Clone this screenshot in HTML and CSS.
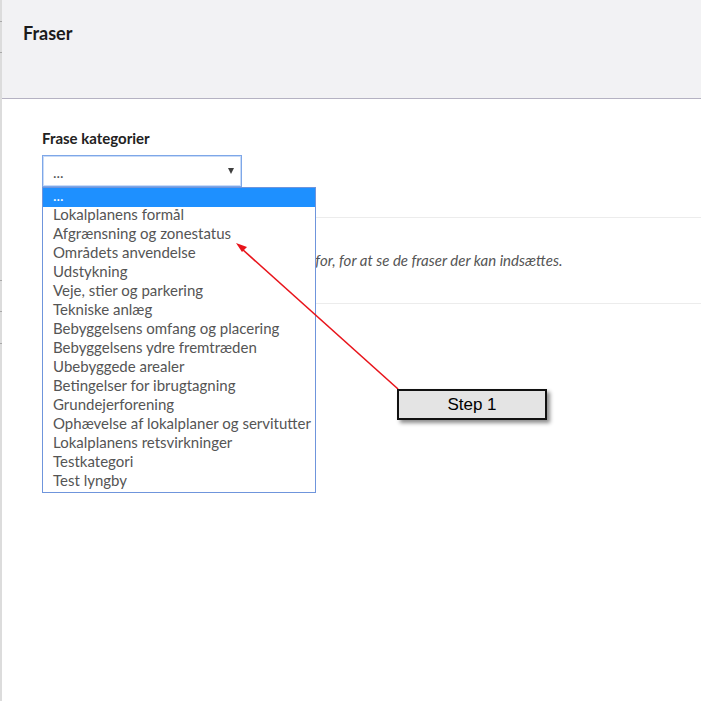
FILE: index.html
```html
<!DOCTYPE html>
<html lang="da">
<head>
<meta charset="utf-8">
<title>Fraser</title>
<link rel="stylesheet" href="styles.css">
</head>
<body>
<div class="app">
  <div class="rail">
    <span class="tick t1"></span>
    <span class="tick t2"></span>
    <span class="tick t3"></span>
    <span class="tick t4"></span>
    <span class="tick t5"></span>
  </div>
  <main class="main">
    <header class="header">
      <h1 class="title">Fraser</h1>
    </header>
    <section class="content">
      <div class="field-label">Frase kategorier</div>
      <div class="select-wrap">
        <div class="select">
          <span class="select-value">...</span>
          <span class="caret"></span>
        </div>
        <ul class="dropdown">
          <li class="option selected">...</li>
          <li class="option">Lokalplanens formål</li>
          <li class="option">Afgrænsning og zonestatus</li>
          <li class="option">Områdets anvendelse</li>
          <li class="option">Udstykning</li>
          <li class="option">Veje, stier og parkering</li>
          <li class="option">Tekniske anlæg</li>
          <li class="option">Bebyggelsens omfang og placering</li>
          <li class="option">Bebyggelsens ydre fremtræden</li>
          <li class="option">Ubebyggede arealer</li>
          <li class="option">Betingelser for ibrugtagning</li>
          <li class="option">Grundejerforening</li>
          <li class="option">Ophævelse af lokalplaner og servitutter</li>
          <li class="option">Lokalplanens retsvirkninger</li>
          <li class="option">Testkategori</li>
          <li class="option">Test lyngby</li>
        </ul>
      </div>
      <div class="hint-row">
        <p class="hint">Vælg venligst en kategori ovenfor, for at se de fraser der kan indsættes.</p>
      </div>
    </section>
  </main>
  <svg class="annotation" width="701" height="701" viewBox="0 0 701 701">
    <line x1="398" y1="389" x2="242" y2="249" stroke="#e8141b" stroke-width="1.6"/>
    <polygon points="236,243 247,247 242,252" fill="#e8141b"/>
  </svg>
  <div class="step">Step 1</div>
</div>
</body>
</html>
```

FILE: styles.css
```css
* { box-sizing: border-box; }
html, body { margin: 0; padding: 0; background: #ffffff; }
body {
  width: 701px;
  height: 701px;
  overflow: hidden;
  font-family: Lato, "Open Sans", sans-serif;
  color: #333;
}
.app {
  position: relative;
  display: flex;
  width: 701px;
  height: 701px;
}
.rail {
  position: relative;
  width: 2px;
  flex: none;
  background: #dcdcdc;
}
.tick {
  position: absolute;
  left: 0;
  width: 2px;
  height: 1px;
  background: #a9a9a9;
}
.t1 { top: 21px; }
.t2 { top: 52px; }
.t3 { top: 280px; }
.t4 { top: 311px; }
.t5 { top: 343px; }
.main {
  flex: 1;
  display: flex;
  flex-direction: column;
  min-width: 0;
}
.header {
  height: 99px;
  background: #f2f2f4;
  border-bottom: 1px solid #b5b2c2;
  padding: 22px 0 0 21px;
}
.title {
  margin: 0;
  font-size: 18px;
  line-height: 22px;
  font-weight: 700;
  color: #1b1b1b;
}
.content {
  padding: 30px 0 0 40px;
}
.field-label {
  font-size: 15px;
  line-height: 18px;
  font-weight: 700;
  color: #222;
}
.select-wrap {
  position: relative;
  margin-top: 8px;
  width: 200px;
}
.select {
  display: flex;
  align-items: center;
  justify-content: space-between;
  height: 32px;
  border: 1px solid #7ea7e8;
  box-shadow: inset 0 0 0 1px #c9dbf7;
  padding: 0 6px 0 10px;
  font-size: 15px;
  color: #555;
}
.select-value { line-height: 18px; padding-top: 2px; }
.caret {
  width: 0;
  height: 0;
  border-left: 3.5px solid transparent;
  border-right: 3.5px solid transparent;
  border-top: 6px solid #3f3f3f;
  margin-right: 1px;
}
.dropdown {
  position: absolute;
  top: 32px;
  left: 0;
  width: 274px;
  margin: 0;
  padding: 0;
  list-style: none;
  background: #fff;
  border: 1px solid #6f95dc;
  z-index: 2;
}
.option {
  height: 19px;
  line-height: 15px;
  padding-left: 10px;
  font-size: 15px;
  color: #555;
  white-space: nowrap;
}
.option.selected {
  background: #1e90ff;
  color: #fff;
}
.hint-row {
  margin-top: 30px;
  border-top: 1px solid #ececec;
  border-bottom: 1px solid #ececec;
  padding: 33px 0 34px 87px;
}
.hint {
  margin: 0;
  font-size: 15px;
  line-height: 18px;
  font-style: italic;
  color: #555;
  white-space: nowrap;
}
.annotation {
  position: absolute;
  left: 0;
  top: 0;
  pointer-events: none;
  z-index: 3;
}
.step {
  position: absolute;
  left: 397px;
  top: 389px;
  width: 150px;
  height: 31px;
  background: #e4e4e4;
  border: 2px solid #111;
  box-shadow: 3px 3px 4px rgba(0, 0, 0, 0.45);
  font-family: "Liberation Sans", Arial, sans-serif;
  font-size: 17px;
  line-height: 27px;
  text-align: center;
  color: #000;
  z-index: 4;
}
```
